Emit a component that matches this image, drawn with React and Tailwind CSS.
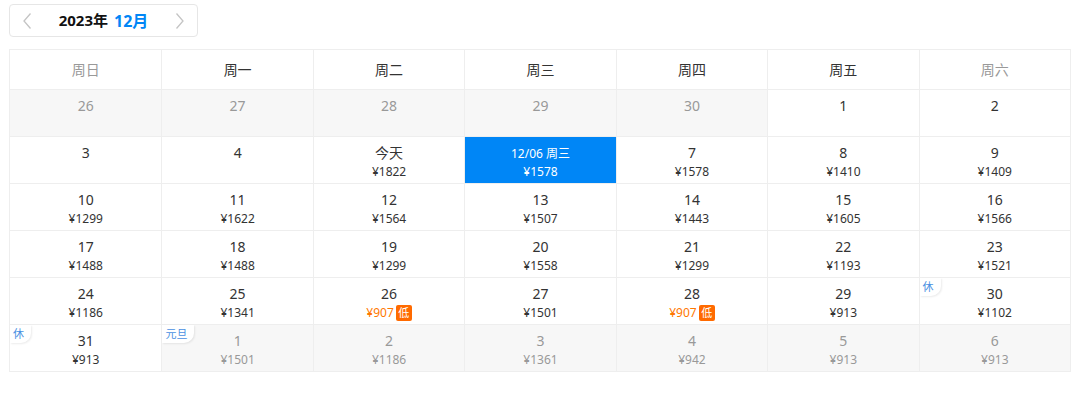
import React from 'react'

const weekdays = ['周日', '周一', '周二', '周三', '周四', '周五', '周六']

const days = [
  { d: '26', off: true }, { d: '27', off: true }, { d: '28', off: true }, { d: '29', off: true }, { d: '30', off: true }, { d: '1' }, { d: '2' },
  { d: '3' }, { d: '4' }, { d: '今天', p: '1822' }, { d: '12/06 周三', p: '1578', sel: true }, { d: '7', p: '1578' }, { d: '8', p: '1410' }, { d: '9', p: '1409' },
  { d: '10', p: '1299' }, { d: '11', p: '1622' }, { d: '12', p: '1564' }, { d: '13', p: '1507' }, { d: '14', p: '1443' }, { d: '15', p: '1605' }, { d: '16', p: '1566' },
  { d: '17', p: '1488' }, { d: '18', p: '1488' }, { d: '19', p: '1299' }, { d: '20', p: '1558' }, { d: '21', p: '1299' }, { d: '22', p: '1193' }, { d: '23', p: '1521' },
  { d: '24', p: '1186' }, { d: '25', p: '1341' }, { d: '26', p: '907', low: true }, { d: '27', p: '1501' }, { d: '28', p: '907', low: true }, { d: '29', p: '913' }, { d: '30', p: '1102', tag: '休' },
  { d: '31', p: '913', tag: '休' }, { d: '1', p: '1501', off: true, tag: '元旦' }, { d: '2', p: '1186', off: true }, { d: '3', p: '1361', off: true }, { d: '4', p: '942', off: true }, { d: '5', p: '913', off: true }, { d: '6', p: '913', off: true },
]

const Chevron = ({ dir }) => (
  <svg width="10" height="18" viewBox="0 0 10 18" fill="none" stroke="#c4c4c4" strokeWidth="1.3">
    {dir === 'left' ? <path d="M8.5 1.5 L2 9 L8.5 16.5" /> : <path d="M1.5 1.5 L8 9 L1.5 16.5" />}
  </svg>
)

const Cell = ({ item, col }) => {
  const borderL = col > 0 ? 'border-l border-[#eeeeee]' : ''
  const borderT = 'border-t border-[#eeeeee]'
  if (item.sel) {
    return (
      <div className={`relative h-[47px] flex flex-col items-center pt-[8px] bg-[#0086f6] text-white ${borderT} ${borderL}`}>
        <div className="text-[12px] leading-[18px]">{item.d}</div>
        <div className="text-[12px] leading-[18px]">¥{item.p}</div>
      </div>
    )
  }
  return (
    <div className={`relative h-[47px] flex flex-col items-center pt-[6px] ${item.off ? 'bg-[#f7f7f7]' : 'bg-white'} ${borderT} ${borderL}`}>
      {item.tag && (
        <div className="absolute left-0 top-0 pl-[3px] pr-[7px] h-[18px] leading-[17px] text-[11px] text-[#4a90e2] bg-white rounded-br-[10px] shadow-[1px_1px_2px_rgba(0,0,0,0.08)]">
          {item.tag}
        </div>
      )}
      <div className={`text-[14px] leading-[20px] ${item.off ? 'text-[#999999]' : 'text-[#333333]'}`}>{item.d}</div>
      {item.p && (
        <div className={`flex items-center gap-[2px] text-[12px] leading-[17px] ${item.low ? 'text-[#ff7700]' : item.off ? 'text-[#999999]' : 'text-[#333333]'}`}>
          <span>¥{item.p}</span>
          {item.low && (
            <span className="inline-flex items-center justify-center w-[16px] h-[16px] rounded-[2px] bg-[#ff6a00] text-white text-[11px] leading-none">低</span>
          )}
        </div>
      )}
    </div>
  )
}

export default function App() {
  return (
    <div className="w-[1080px] h-[393px] bg-white pt-[4px] pl-[9px]" style={{ fontFamily: '"Noto Sans", "Noto Sans CJK SC", sans-serif' }}>
      <div className="w-[189px] h-[33px] border border-[#e6e6e6] rounded-[4px] flex items-center px-[12px]">
        <Chevron dir="left" />
        <div className="flex-1 flex items-center justify-center gap-[6px]">
          <span className="text-[15px] font-bold text-[#111111]">2023年</span>
          <span className="text-[16px] font-bold text-[#0086f6]">12月</span>
        </div>
        <Chevron dir="right" />
      </div>
      <div className="mt-[12px] w-[1062px] border-l border-r border-b border-[#eeeeee]">
        <div className="grid grid-cols-7 border-t border-[#eeeeee]">
          {weekdays.map((w, i) => (
            <div
              key={w}
              className={`h-[39px] flex items-center justify-center text-[14px] ${i === 0 || i === 6 ? 'text-[#999999]' : 'text-[#333333]'} ${i > 0 ? 'border-l border-[#eeeeee]' : ''}`}
            >
              {w}
            </div>
          ))}
        </div>
        <div className="grid grid-cols-7">
          {days.map((item, i) => (
            <Cell key={i} item={item} col={i % 7} />
          ))}
        </div>
      </div>
    </div>
  )
}
